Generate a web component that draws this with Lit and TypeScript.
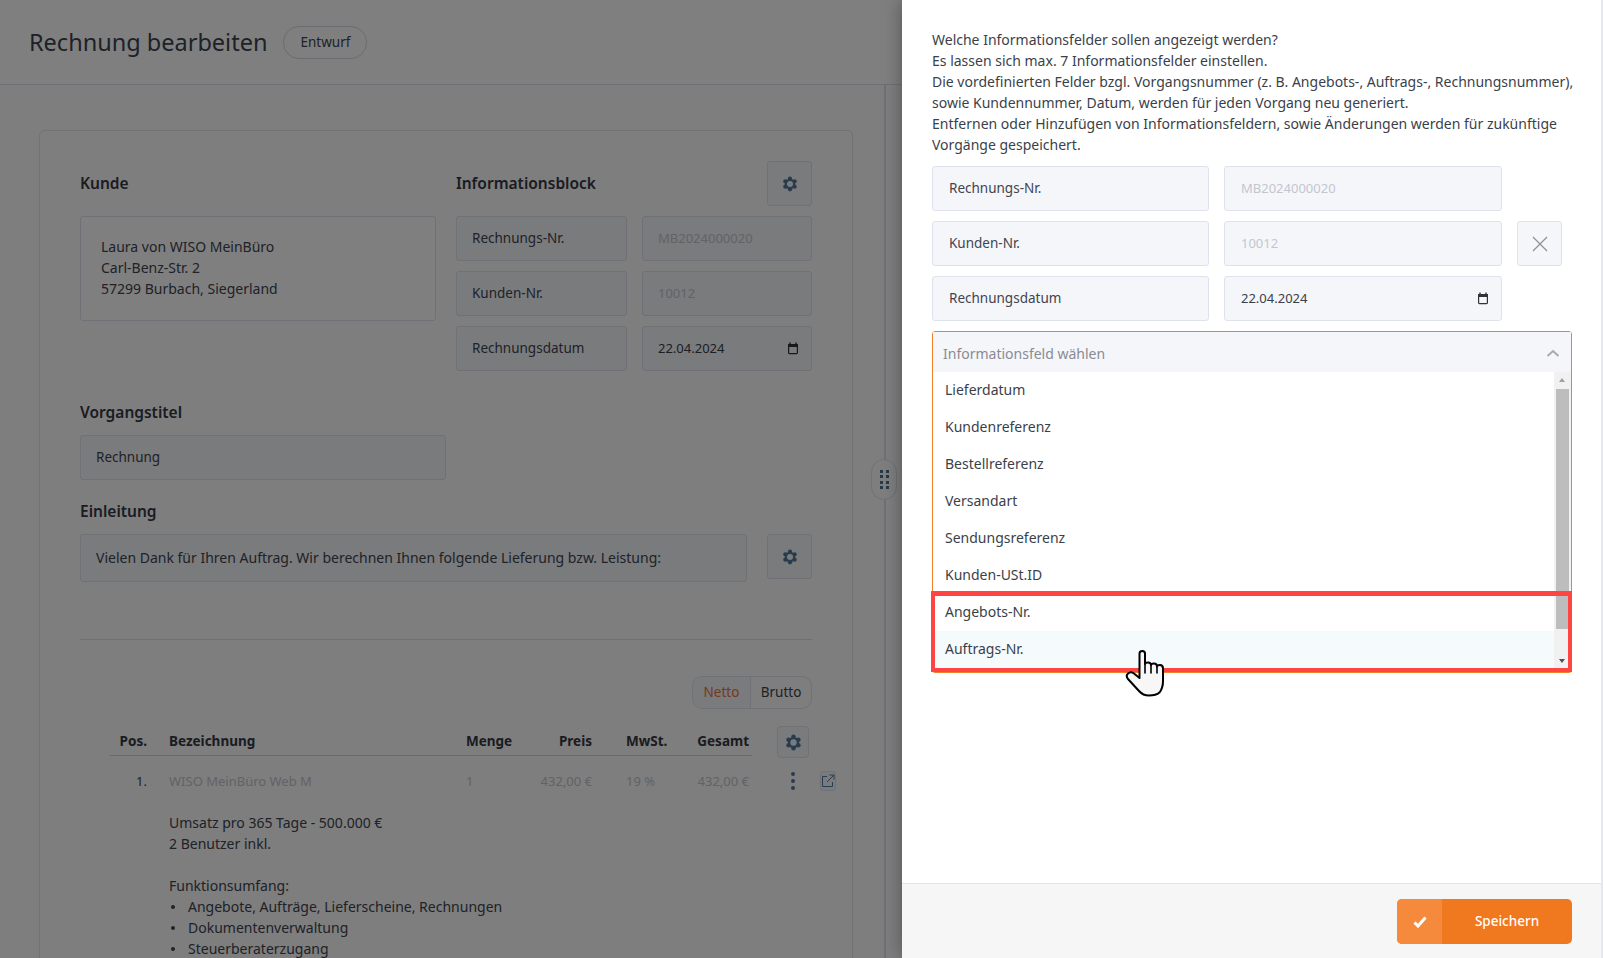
import { LitElement, html, css, svg } from "lit";
import { customElement } from "lit/decorators.js";

const gearTeeth = [0, 60, 120, 180, 240, 300].map((a) => {
  const r = (a * Math.PI) / 180;
  return svg`<circle cx=${12 + 8 * Math.sin(r)} cy=${12 - 8 * Math.cos(r)} r="3.2"></circle>`;
});
const gear = (size: number) => html`<svg class="gear" width=${size} height=${size} viewBox="0 0 24 24" fill="#52789a">
  ${gearTeeth}
  <path fill-rule="evenodd" d="M12 3 19.800 7.500v9L12 21 4.200 16.500v-9ZM12 7.400a4.600 4.600 0 1 0 0 9.200 4.600 4.600 0 0 0 0-9.200Z"></path>
</svg>`;
const calendar = html`<svg width="12" height="13" viewBox="0 0 12 13" fill="none">
  <path d="M3 .5v2M9 .5v2" stroke="#333" stroke-width="1.400"></path>
  <rect x="1.600" y="2.600" width="8.800" height="9" rx=".8" stroke="#333" stroke-width="1.200"></rect>
  <rect x="1" y="2" width="10" height="3" fill="#333"></rect>
</svg>`;

const options = ["Lieferdatum", "Kundenreferenz", "Bestellreferenz", "Versandart", "Sendungsreferenz", "Kunden-USt.ID", "Angebots-Nr.", "Auftrags-Nr."];

@customElement("app-root")
export class AppRoot extends LitElement {
  static styles = css`
    :host {
      display: block;
      position: relative;
      height: 958px;
      width: 1603px;
      overflow: hidden;
      background: #fcfcfd;
      color: #40444f;
      font-family: "Noto Sans", "Open Sans", sans-serif;
      font-size: 14px;
      line-height: 21px;
    }
    .header {
      height: 85px;
      box-sizing: border-box;
      background: #ffffff;
      border-bottom: 1px solid #dfe1ea;
      display: flex;
      align-items: center;
      padding: 0 0 0 29px;
      gap: 16px;
    }
    .title { font-size: 23.5px; color: #3d4350; line-height: 32px; }
    .badge {
      height: 33px;
      box-sizing: border-box;
      width: 84px;
      border: 1px solid #d6d9e4;
      border-radius: 16px;
      display: flex;
      align-items: center;
      justify-content: center;
      font-size: 13.5px;
    }
    .main { display: flex; height: 873px; overflow: hidden; }
    .content { width: 884px; box-sizing: border-box; padding: 45px 31px 0 39px; }
    .rail { width: 2px; background: #dfe1ea; }
    .card {
      border: 1px solid #e2e4ec;
      border-radius: 5px;
      padding: 30px 40px 0 40px;
      height: 900px;
      box-sizing: border-box;
    }
    .top { display: grid; grid-template-columns: 356px 356px; gap: 20px; }
    h3 { margin: 0; padding-bottom: 2px; font-size: 15.5px; font-weight: 600; color: #343843; line-height: 24px; }
    .headrow { height: 45px; display: flex; align-items: center; justify-content: space-between; margin-bottom: 10px; }
    .addr {
      border: 1px solid #dfe2ec;
      border-radius: 3px;
      height: 105px;
      box-sizing: border-box;
      padding: 19px 20px;
      background: #fff;
    }
    .box {
      background: #f5f6fa;
      border: 1px solid #dfe2ec;
      border-radius: 3px;
      box-sizing: border-box;
      display: flex;
      align-items: center;
      justify-content: space-between;
      font-size: 13.5px;
    }
    .iconbtn { width: 45px; height: 45px; justify-content: center; flex: none; }
    .inforows { display: grid; grid-template-columns: 171px 170px; gap: 10px 15px; }
    .f { height: 45px; padding: 0 15px 1px; }
    .ph { color: #c3c6ce; font-size: 13px; }
    .val { color: #3a3e48; font-size: 13px; }
    .f.val, .prows .box.val { padding-right: 12px; }
    .section { margin-top: 19px; }
    .section.first { margin-top: 29px; }
    .section h3 { margin-bottom: 9px; }
    .title-input { width: 366px; height: 45px; padding: 0 15px 1px; }
    .intro { display: flex; gap: 20px; align-items: flex-start; }
    .intro-text { flex: 1; height: 48px; padding: 0 15px 2px; font-size: 14px; }
    .hr { height: 1px; background: #dfe1ea; margin: 57px 0 36px; }
    .togglewrap { display: flex; justify-content: flex-end; margin-bottom: 17px; }
    .toggle { display: flex; height: 33px; width: 120px; border: 1px solid #dfe2ec; border-radius: 10px; box-sizing: border-box; overflow: hidden; font-size: 13.5px; }
    .toggle div { display: flex; align-items: center; justify-content: center; }
    .netto { width: 57px; background: #f5f6fa; color: #e8743a; border-right: 1px solid #dfe2ec; }
    .brutto { flex: 1; }
    .tablehead { display: flex; margin-left: 30px; align-items: flex-start; }
    .gridrow { display: grid; grid-template-columns: 59px 297px 126px 88px 69px; width: 642px; }
    .gridrow > div:nth-child(1) { text-align: right; padding-right: 22px; }
    .gridrow > div:nth-child(4) { padding-left: 34px; }
    .gridrow > div:nth-child(5) { text-align: right; }
    .preis { display: flex; justify-content: space-between; }
    .th { height: 29px; border-bottom: 1px solid #cfd2db; font-weight: 700; font-size: 13.5px; color: #343843; line-height: 30px; }
    .tablegear { margin-left: 25px; width: 32px; height: 32px; border-radius: 4px; }
    .rowline { display: flex; margin-left: 30px; align-items: center; height: 36px; margin-top: 5px; margin-bottom: 13px; }
    .rowline .gridrow { color: #c3c6ce; font-size: 13px; }
    .rowline .gridrow > div:nth-child(1) { color: #40444f; }
    .dots { margin-left: 42px; display: flex; flex-direction: column; gap: 3px; width: 4px; }
    .dots i { display: block; width: 4px; height: 4px; border-radius: 50%; background: #52789a; }
    .linkbtn { margin-left: 25px; width: 20px; height: 20px; border-radius: 3px; justify-content: center; }
    .desc { margin-left: 89px; }
    .desc .li { display: flex; }
    .desc .li::before { content: ""; width: 4px; height: 4px; border-radius: 50%; background: #40444f; margin: 9px 13px 0 2px; }
    .scrim { position: absolute; inset: 0; background: rgba(0, 0, 0, .5); }
    .handle {
      position: absolute;
      left: 871px;
      top: 459px;
      width: 26px;
      height: 41px;
      box-sizing: border-box;
      border-radius: 13px;
      background: #fcfcfd;
      border: 1px solid #e2e4ec;
      display: grid;
      grid-template-columns: 3px 3px;
      gap: 2.5px 3px;
      align-content: center;
      justify-content: center;
    }
    .handle i { background: #4f7392; height: 3px; }
    .panel {
      position: absolute;
      top: 0;
      right: 0;
      bottom: 0;
      width: 701px;
      box-sizing: border-box;
      background: #fff;
      border-right: 2px solid #e7e7f2;
      box-shadow: 0 0 18px rgba(0, 0, 0, .35);
      display: flex;
      flex-direction: column;
    }
    .pbody { flex: 1; padding: 29px 29px 0 30px; }
    .intro-p { margin: 0 0 11px; color: #3b3f4a; font-size: 14px; white-space: nowrap; }
    .prows { display: grid; grid-template-columns: 277px 278px 45px; gap: 10px 15px; }
    .prows .box { height: 45px; padding: 0 15px 1px 16px; }
    .prows .x { justify-content: center; padding: 0; }
    .select {
      position: relative;
      margin-top: 10px;
      height: 342px;
      border: 1px solid #f0802c;
      border-radius: 3px;
      box-sizing: border-box;
    }
    .selhead {
      height: 40px;
      box-sizing: border-box;
      background: #f5f6fa;
      display: flex;
      align-items: center;
      justify-content: space-between;
      padding: 2px 11px 0 10px;
      color: #888b94;
    }
    .list { display: flex; height: 300px; overflow: hidden; }
    .items { flex: 1; }
    .item { height: 37px; box-sizing: border-box; padding: 0 12px 2px; display: flex; align-items: center; color: #3b3f4a; }
    .item.hover { background: #f5fafc; }
    .sb { width: 17px; flex: none; background: #f1f1f1; position: relative; }
    .sb .thumb { position: absolute; left: 2px; right: 2px; top: 17px; height: 240px; background: #bdbdbd; }
    .sb .up, .sb .down {
      position: absolute;
      left: 5px;
      width: 0;
      height: 0;
      border-left: 3.5px solid transparent;
      border-right: 3.5px solid transparent;
    }
    .sb .up { top: 6px; border-bottom: 4px solid #9f9f9f; }
    .sb .down { bottom: 9px; border-top: 4px solid #505050; }
    .red { position: absolute; left: -2px; right: -1px; top: 259px; bottom: 0; border: solid #ff4444; border-width: 5px 4px 4.5px 4.5px; pointer-events: none; }
    .pfoot {
      height: 75px;
      box-sizing: border-box;
      flex: none;
      background: #f6f6f7;
      border-top: 1px solid #e1e2ea;
      padding: 15px 29px 0 0;
      display: flex;
      justify-content: flex-end;
    }
    .save { width: 175px; height: 45px; border-radius: 5px; background: #f0781e; display: flex; overflow: hidden; color: #fff; font-weight: 500; font-size: 13.5px; }
    .save .ic { width: 45px; background: #f58a3c; display: flex; align-items: center; justify-content: center; }
    .save .tx { flex: 1; display: flex; align-items: center; justify-content: center; }
    .hand { position: absolute; left: 1124px; top: 648px; }
  `;

  render() {
    return html`
      <div class="header">
        <div class="title">Rechnung bearbeiten</div>
        <div class="badge">Entwurf</div>
      </div>
      <div class="main">
        <div class="content">
          <div class="card">
            <div class="top">
              <div>
                <div class="headrow"><h3>Kunde</h3></div>
                <div class="addr">Laura von WISO MeinBüro<br />Carl-Benz-Str. 2<br />57299 Burbach, Siegerland</div>
              </div>
              <div>
                <div class="headrow"><h3>Informationsblock</h3><div class="box iconbtn">${gear(16)}</div></div>
                <div class="inforows">
                  <div class="box f">Rechnungs-Nr.</div><div class="box f ph">MB2024000020</div>
                  <div class="box f">Kunden-Nr.</div><div class="box f ph">10012</div>
                  <div class="box f">Rechnungsdatum</div><div class="box f val">22.04.2024 ${calendar}</div>
                </div>
              </div>
            </div>
            <div class="section first">
              <h3>Vorgangstitel</h3>
              <div class="box title-input">Rechnung</div>
            </div>
            <div class="section">
              <h3>Einleitung</h3>
              <div class="intro">
                <div class="box intro-text">Vielen Dank für Ihren Auftrag. Wir berechnen Ihnen folgende Lieferung bzw. Leistung:</div>
                <div class="box iconbtn">${gear(16)}</div>
              </div>
            </div>
            <div class="hr"></div>
            <div class="togglewrap">
              <div class="toggle"><div class="netto">Netto</div><div class="brutto">Brutto</div></div>
            </div>
            <div class="tablehead">
              <div class="gridrow th"><div>Pos.</div><div>Bezeichnung</div><div class="preis"><span>Menge</span><span>Preis</span></div><div>MwSt.</div><div>Gesamt</div></div>
              <div class="box tablegear iconbtn">${gear(17)}</div>
            </div>
            <div class="rowline">
              <div class="gridrow"><div>1.</div><div>WISO MeinBüro Web M</div><div class="preis"><span>1</span><span>432,00 €</span></div><div>19 %</div><div>432,00 €</div></div>
              <div class="dots"><i></i><i></i><i></i></div>
              <div class="box linkbtn">
                <svg width="14" height="14" viewBox="0 0 14 14" fill="none" stroke="#52789a" stroke-width="1">
                  <path d="M6 2.500H1.500v10h10V8M8.500 1h4.500v4.500M13 1 6 8"></path>
                </svg>
              </div>
            </div>
            <div class="desc">
              <div>Umsatz pro 365 Tage - 500.000 €</div>
              <div>2 Benutzer inkl.</div>
              <div>&nbsp;</div>
              <div>Funktionsumfang:</div>
              <div class="li">Angebote, Aufträge, Lieferscheine, Rechnungen</div>
              <div class="li">Dokumentenverwaltung</div>
              <div class="li">Steuerberaterzugang</div>
            </div>
          </div>
        </div>
        <div class="rail"></div>
      </div>
      <div class="handle">${[0, 1, 2, 3, 4, 5, 6, 7].map(() => html`<i></i>`)}</div>
      <div class="scrim"></div>
      <div class="panel">
        <div class="pbody">
          <p class="intro-p">Welche Informationsfelder sollen angezeigt werden?<br />Es lassen sich max. 7 Informationsfelder einstellen.<br />Die vordefinierten Felder bzgl. Vorgangsnummer (z. B. Angebots-, Auftrags-, Rechnungsnummer),<br />sowie Kundennummer, Datum, werden für jeden Vorgang neu generiert.<br />Entfernen oder Hinzufügen von Informationsfeldern, sowie Änderungen werden für zukünftige<br />Vorgänge gespeichert.</p>
          <div class="prows">
            <div class="box">Rechnungs-Nr.</div><div class="box ph">MB2024000020</div><div></div>
            <div class="box">Kunden-Nr.</div><div class="box ph">10012</div>
            <div class="box x">
              <svg width="16" height="16" viewBox="0 0 16 16" fill="none" stroke="#8d9097" stroke-width="1.200"><path d="M1 1l14 14M15 1 1 15"></path></svg>
            </div>
            <div class="box">Rechnungsdatum</div><div class="box val">22.04.2024 ${calendar}</div><div></div>
          </div>
          <div class="select">
            <div class="selhead">
              <span>Informationsfeld wählen</span>
              <svg width="14" height="8" viewBox="0 0 14 8" fill="none" stroke="#a8aab0" stroke-width="2"><path d="M1.500 7 7 2l5.500 5"></path></svg>
            </div>
            <div class="list">
              <div class="items">
                ${options.map((o, i) => html`<div class="item ${i === 7 ? "hover" : ""}">${o}</div>`)}
              </div>
              <div class="sb"><div class="up"></div><div class="thumb"></div><div class="down"></div></div>
            </div>
            <div class="red"></div>
          </div>
        </div>
        <div class="pfoot">
          <div class="save">
            <div class="ic">
              <svg width="14" height="12" viewBox="0 0 14 12" fill="none" stroke="#fff" stroke-width="3"><path d="M1.500 6.500 5 10l7.500-8.500"></path></svg>
            </div>
            <div class="tx">Speichern</div>
          </div>
        </div>
      </div>
      <svg class="hand" width="42" height="50" viewBox="0 0 42 50" fill="#f7f7f7" stroke="#000" stroke-width="2" stroke-linejoin="round" stroke-linecap="round">
        <path d="M15.500 30V5.500Q15.500 3 18.300 3 21 3 21 5.500V16Q21 14.500 24 14.500 27 14.500 27 17 27 15.500 30 15.500 33 15.500 33 18.500 33 17 36 17 39 17 39 20.500V33Q39 40 35.500 44.500 32 47.500 25 47.500 19 47.500 15 43L4 31Q1.500 28 4 25.500 7 23 10 25.500Z"></path>
        <path d="M21 16V25M27 17V25M33 18.500V25" fill="none" stroke-width="1.600"></path>
      </svg>
    `;
  }
}
